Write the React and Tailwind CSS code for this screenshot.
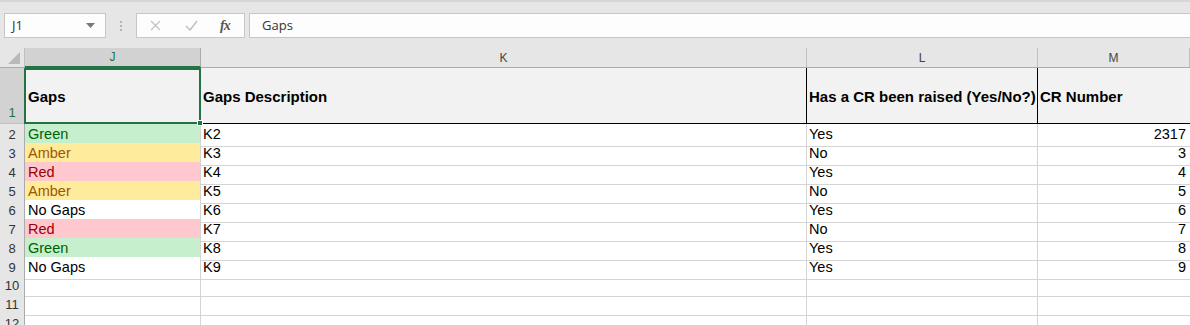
import React from 'react';

const rows = [
  { n: 2, gap: 'Green', desc: 'K2', cr: 'Yes', num: '2317' },
  { n: 3, gap: 'Amber', desc: 'K3', cr: 'No', num: '3' },
  { n: 4, gap: 'Red', desc: 'K4', cr: 'Yes', num: '4' },
  { n: 5, gap: 'Amber', desc: 'K5', cr: 'No', num: '5' },
  { n: 6, gap: 'No Gaps', desc: 'K6', cr: 'Yes', num: '6' },
  { n: 7, gap: 'Red', desc: 'K7', cr: 'No', num: '7' },
  { n: 8, gap: 'Green', desc: 'K8', cr: 'Yes', num: '8' },
  { n: 9, gap: 'No Gaps', desc: 'K9', cr: 'Yes', num: '9' },
  { n: 10 },
  { n: 11 },
  { n: 12 },
];

const gapStyle = {
  Green: 'bg-[#c6efce] text-[#006100]',
  Amber: 'bg-[#ffeb9c] text-[#9c5700]',
  Red: 'bg-[#ffc7ce] text-[#9c0006]',
  'No Gaps': 'bg-white text-black',
};

const cols = 'grid grid-cols-[25px_176px_606px_231px_152px]';

const App = () => {
  return (
    <div className="w-[1190px] h-[325px] overflow-hidden bg-white font-['Liberation_Sans',Arial,sans-serif]">
      {/* formula bar */}
      <div className="h-[48px] bg-[#e6e6e6] border-t-2 border-[#d9d6d2] flex items-start pt-[11px] font-['Open_Sans','Noto_Sans',sans-serif] text-[13px] text-[#333]">
        <div className="ml-[4px] w-[102px] h-[25px] bg-[#fdfdfd] border border-[#c6c6c6] flex items-center justify-between pl-[7px] pr-[10px]">
          <span>J1</span>
          <svg width="9" height="5" viewBox="0 0 9 5"><path d="M0 0h9L4.5 5z" fill="#777" /></svg>
        </div>
        <div className="w-[30px] h-[25px] flex flex-col items-center justify-center gap-[2px]">
          {[0, 1, 2].map((i) => (
            <span key={i} className="w-[2px] h-[2px] bg-[#b4b4b4]" />
          ))}
        </div>
        <div className="w-[109px] h-[25px] bg-[#fdfdfd] border border-[#c6c6c6] flex items-center">
          <svg className="ml-[13px]" width="11" height="11" viewBox="0 0 11 11">
            <path d="M1 1l9 9M10 1l-9 9" stroke="#c3c3c3" strokeWidth="1.3" />
          </svg>
          <svg className="ml-[24px]" width="13" height="11" viewBox="0 0 13 11">
            <path d="M1 6l4 4 7-9" stroke="#c3c3c3" strokeWidth="1.6" fill="none" />
          </svg>
          <span className="ml-[22px] font-['Liberation_Serif',serif] italic font-bold text-[14px] text-[#555] tracking-[-1px]">fx</span>
        </div>
        <div className="ml-[4px] flex-1 h-[25px] bg-[#fdfdfd] border-y border-l border-[#c6c6c6] flex items-center pl-[12px]">
          Gaps
        </div>
      </div>

      {/* column headers */}
      <div className={`${cols} h-[20px] bg-[#e6e6e6] text-[12px] text-[#444] border-b border-[#ababab]`}>
        <div className="relative border-r border-[#c0c0c0]">
          <svg className="absolute right-[4px] bottom-[3px]" width="12" height="12" viewBox="0 0 12 12">
            <path d="M12 0V12H0z" fill="#b9b9b9" />
          </svg>
        </div>
        <div className="bg-[#d2d2d2] text-[#217346] flex items-center justify-center border-r border-[#ababab] border-b-2 border-b-[#217346] -mb-px">J</div>
        <div className="flex items-center justify-center border-r border-[#c0c0c0]">K</div>
        <div className="flex items-center justify-center border-r border-[#c0c0c0]">L</div>
        <div className="flex items-center justify-center border-r border-[#c0c0c0]">M</div>
      </div>

      {/* header row */}
      <div className={`${cols} h-[56px] text-[15px] font-bold text-black`}>
        <div className="bg-[#d2d2d2] text-[#217346] font-normal text-[13px] flex items-end justify-center pb-[1px] border-r border-[#ababab] border-b border-b-[#c0c0c0]">1</div>
        <div className="relative bg-[#f2f2f2] border-2 border-[#217346] flex items-center pl-[2px] pt-[3px] -ml-px">
          Gaps
          <span className="absolute right-[-4px] bottom-[-4px] w-[6px] h-[6px] bg-[#217346] border border-white z-10" />
        </div>
        <div className="bg-[#f2f2f2] border-r border-b border-black flex items-center pl-[2px] pt-[3px]">Gaps Description</div>
        <div className="bg-[#f2f2f2] border-r border-b border-black flex items-center pl-[2px] pt-[3px] whitespace-nowrap">Has a CR been raised (Yes/No?)</div>
        <div className="bg-[#f2f2f2] border-b border-black flex items-center pl-[2px] pt-[3px]">CR Number</div>
      </div>

      {/* data rows */}
      {rows.map((r) => (
        <div key={r.n} className={`${cols} h-[19px] text-[14.5px]`}>
          <div className="bg-[#e6e6e6] text-[13px] text-[#333] flex items-center justify-center border-r border-[#ababab] border-b border-b-[#c0c0c0]">{r.n}</div>
          <div className={`${r.gap ? gapStyle[r.gap] : ''} border-r border-b border-[#d4d4d4] flex items-center pl-[3px]`}>{r.gap}</div>
          <div className="border-r border-b border-[#d4d4d4] flex items-center pl-[2px]">{r.desc}</div>
          <div className="border-r border-b border-[#d4d4d4] flex items-center pl-[2px]">{r.cr}</div>
          <div className="border-b border-[#d4d4d4] flex items-center justify-end pr-[4px]">{r.num}</div>
        </div>
      ))}
    </div>
  );
};

export default App;
